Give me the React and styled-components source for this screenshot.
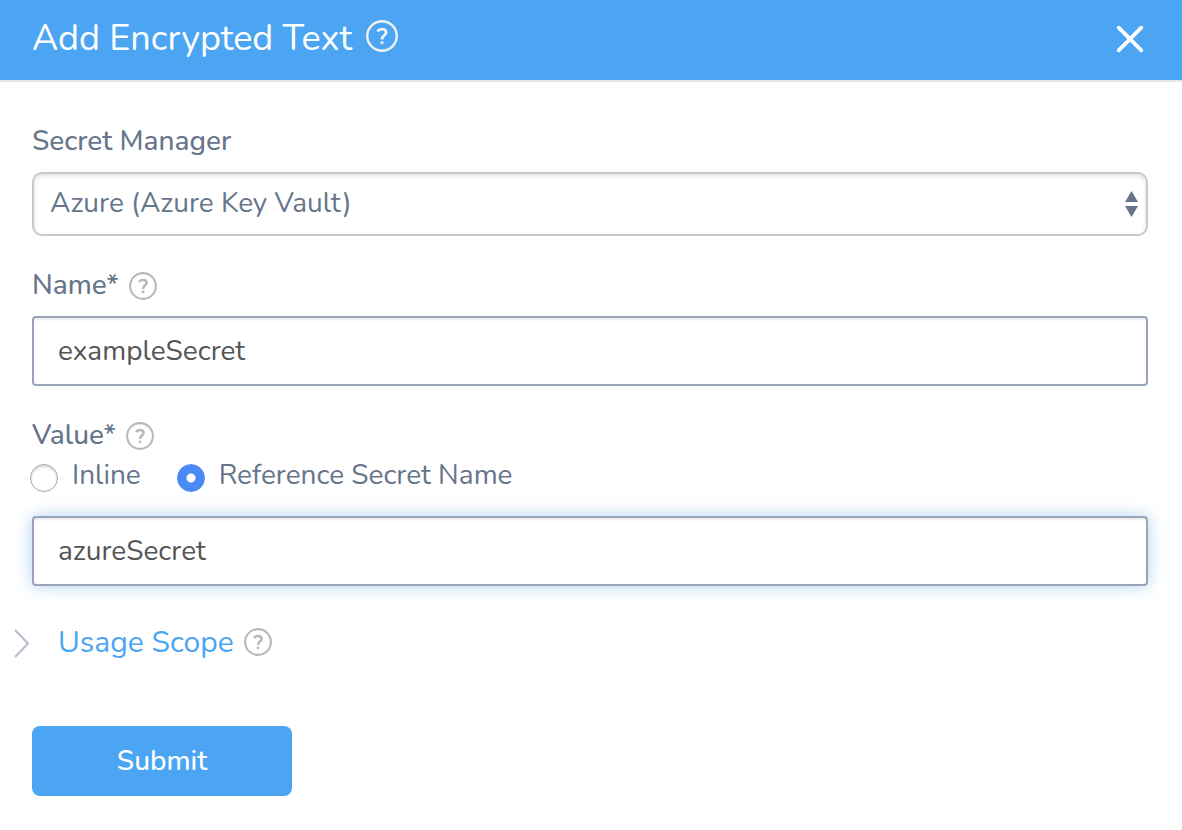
import React, { useState } from "react";
import styled, { createGlobalStyle } from "styled-components";

const GlobalStyle = createGlobalStyle`
  * { box-sizing: border-box; }
  body {
    margin: 0;
    background: #fff;
    color: #66758a;
    font-family: Nunito, "Open Sans", "Noto Sans", sans-serif;
    font-size: 28px;
    line-height: 40px;
  }
  button, input, select { font: inherit; }
`;

const Header = styled.header`
  display: flex;
  align-items: center;
  justify-content: space-between;
  height: 82px;
  padding: 0 36px 2px 32px;
  background: #4ca5f2;
  border-bottom: 2px solid #e5e6e8;
  color: #fff;
`;

const Heading = styled.div`
  display: flex;
  align-items: center;
  gap: 14px;
  padding-bottom: 6px;
`;

const Title = styled.h1`
  margin: 0;
  padding-top: 6px;
  font-size: 36px;
  font-weight: 400;
  line-height: 48px;
`;

const IconButton = styled.button`
  display: flex;
  padding: 0;
  border: 0;
  background: none;
  color: ${(p) => p.$color || "#b8b8b8"};
  cursor: pointer;
`;

const Form = styled.form`
  display: flex;
  flex-direction: column;
  gap: 30px;
  padding: 40px 34px 34px 32px;
`;

const Field = styled.div`
  display: flex;
  flex-direction: column;
`;

const LabelRow = styled.div`
  display: flex;
  align-items: center;
  gap: 10px;
  margin-bottom: ${(p) => (p.$tight ? 0 : 10)}px;
`;

const Label = styled.label`
  padding-bottom: 2px;
  font-weight: 500;
  line-height: 38px;
`;

const SelectBox = styled.div`
  position: relative;
`;

const Select = styled.select`
  display: block;
  width: 100%;
  height: 64px;
  padding: 0 40px 2px 16px;
  appearance: none;
  border: 2px solid #c9c9c9;
  border-radius: 10px;
  background: #fff;
  box-shadow: inset 0 2px 4px rgba(0, 0, 0, 0.12);
  color: #66758a;
  font-weight: 400;
`;

const SelectArrows = styled.svg`
  position: absolute;
  top: 18px;
  right: 10px;
  pointer-events: none;
`;

const TextInput = styled.input`
  width: 100%;
  height: 70px;
  padding: 0 24px;
  border: 2px solid #98a4b8;
  border-radius: 4px;
  outline: none;
  background: #fff;
  box-shadow: inset 0 2px 2px rgba(0, 0, 0, 0.08)
    ${(p) => (p.$active ? ", 0 0 16px rgba(76, 155, 225, 0.45)" : "")};
  color: #555;
`;

const RadioRow = styled.div`
  display: flex;
  align-items: center;
  gap: 36px;
  height: 44px;
  margin: 0 0 16px -2px;
`;

const RadioLabel = styled.label`
  display: flex;
  align-items: center;
  gap: 14px;
  font-weight: 400;
`;

const RadioText = styled.span`
  padding-bottom: 6px;
`;

const Radio = styled.input`
  flex: none;
  width: 28px;
  height: 28px;
  margin: 0;
  appearance: none;
  border: 1px solid #a9a9a9;
  border-radius: 50%;
  background: #fff;
  box-shadow: inset 0 2px 3px rgba(0, 0, 0, 0.16);

  &:checked {
    border-color: #4a8af6;
    background: radial-gradient(circle, #fff 0 4px, #4a8af6 5px);
    box-shadow: none;
  }
`;

const ScopeRow = styled.div`
  display: flex;
  align-items: center;
  gap: 10px;
  margin: 6px 0 34px -18px;
`;

const ScopeToggle = styled.button`
  display: flex;
  align-items: center;
  gap: 28px;
  padding: 2px 0 0;
  border: 0;
  background: none;
  color: #4ca5f2;
  font-size: 30px;
  font-weight: 400;
  line-height: 38px;
  cursor: pointer;
`;

const SubmitButton = styled.button`
  width: 260px;
  height: 70px;
  padding: 0;
  border: 0;
  border-radius: 8px;
  background: #4ca5f2;
  color: #fff;
  font-weight: 500;
  cursor: pointer;
`;

function Help({ label, size = 28, color }) {
  return (
    <IconButton type="button" aria-label={label} $color={color}>
      <svg width={size} height={size} viewBox="0 0 28 28" fill="none" stroke="currentColor">
        <circle cx="14" cy="14" r="12.9" strokeWidth="2.1" />
        <g strokeWidth="2.5" strokeLinejoin="round">
          <path d="M10 9.9C11 8.6 12.3 8 14 8C16.2 8 17.6 9.2 17.6 10.9C17.6 13.4 14 13.4 14 17" />
          <path d="M14 18.6V21.1" />
        </g>
      </svg>
    </IconButton>
  );
}

export default function App() {
  const [source, setSource] = useState("reference");
  return (
    <>
      <GlobalStyle />
      <Header>
        <Heading>
          <Title>Add Encrypted Text</Title>
          <Help label="About encrypted text" size={32} color="#f0f0f0" />
        </Heading>
        <IconButton type="button" aria-label="Close" $color="#fff">
          <svg width="32" height="32" viewBox="0 0 32 32" stroke="currentColor" strokeWidth="3.8" strokeLinecap="round">
            <path d="M4.7 4.7L27.3 27.3M27.3 4.7L4.7 27.3" />
          </svg>
        </IconButton>
      </Header>
      <Form onSubmit={(e) => e.preventDefault()}>
        <Field>
          <LabelRow>
            <Label htmlFor="manager">Secret Manager</Label>
          </LabelRow>
          <SelectBox>
            <Select id="manager">
              <option>Azure (Azure Key Vault)</option>
            </Select>
            <SelectArrows width="13" height="28" viewBox="0 0 13 28" fill="#66758a">
              <path d="M6.5 1L13 12H0ZM0 16H13L6.5 27Z" />
            </SelectArrows>
          </SelectBox>
        </Field>
        <Field>
          <LabelRow>
            <Label htmlFor="name">Name*</Label>
            <Help label="About the name" />
          </LabelRow>
          <TextInput id="name" type="text" defaultValue="exampleSecret" />
        </Field>
        <Field>
          <LabelRow $tight>
            <Label htmlFor="value">Value*</Label>
            <Help label="About the value" />
          </LabelRow>
          <RadioRow>
            <RadioLabel>
              <Radio type="radio" name="source" checked={source === "inline"} onChange={() => setSource("inline")} />
              <RadioText>Inline</RadioText>
            </RadioLabel>
            <RadioLabel>
              <Radio type="radio" name="source" checked={source === "reference"} onChange={() => setSource("reference")} />
              <RadioText>Reference Secret Name</RadioText>
            </RadioLabel>
          </RadioRow>
          <TextInput id="value" type="text" defaultValue="azureSecret" $active />
        </Field>
        <ScopeRow>
          <ScopeToggle type="button" aria-expanded="false">
            <svg width="16" height="30" viewBox="0 0 16 30" fill="none" stroke="#b4bdca" strokeWidth="2">
              <path d="M1 2L14 15.5L1 29" />
            </svg>
            Usage Scope
          </ScopeToggle>
          <Help label="About usage scope" />
        </ScopeRow>
        <SubmitButton type="submit">Submit</SubmitButton>
      </Form>
    </>
  );
}
